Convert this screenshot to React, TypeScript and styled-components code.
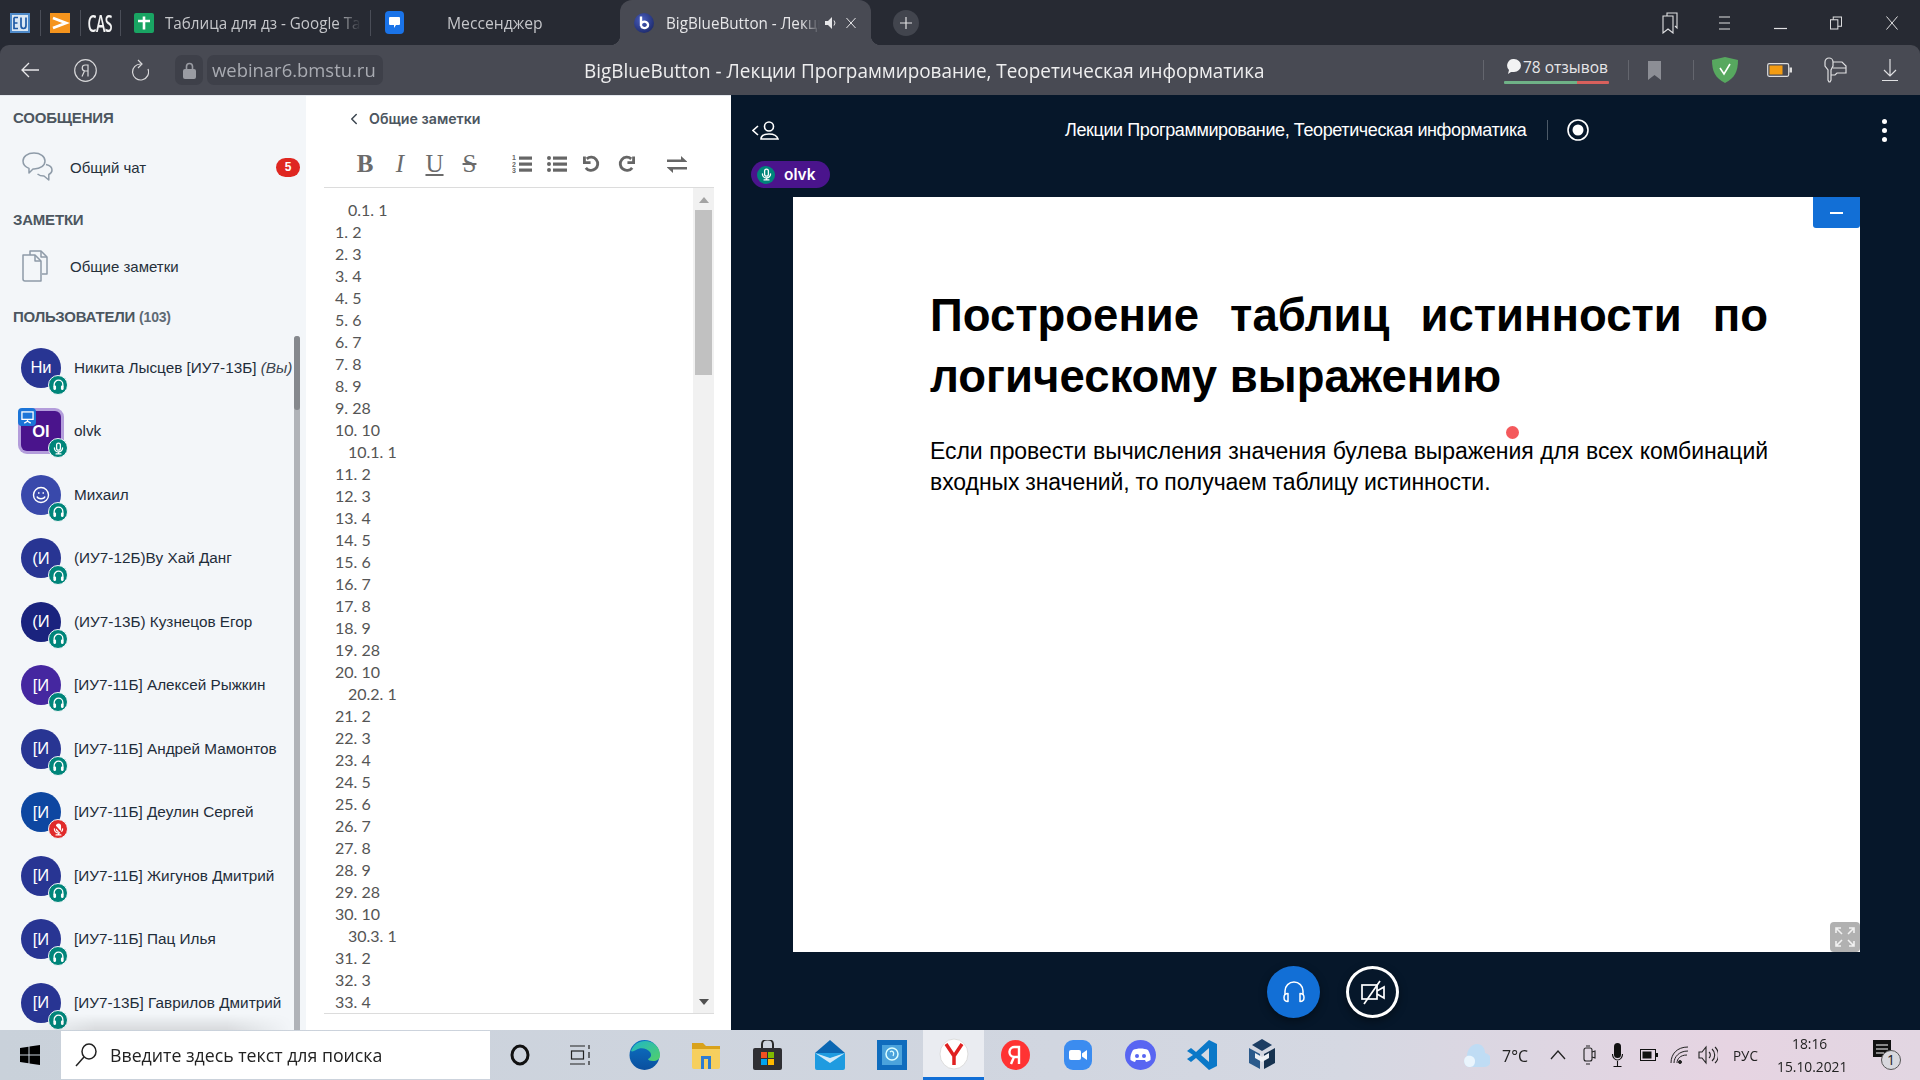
import React from "react";
import styled, { createGlobalStyle } from "styled-components";
import { ChevronLeft } from "lucide-react";

const Global = createGlobalStyle`
  html, body { margin: 0; padding: 0; overflow: hidden; background: #272a33; }
  * { box-sizing: border-box; }
`;

const Page = styled.div`
  width: 1920px; height: 1080px; display: flex; flex-direction: column; overflow: hidden;
  background: #272a33; font-family: "Liberation Sans", Arial, sans-serif;
`;
const Slot = styled.div<{ $w: number; $ml: number }>`
  flex: none; width: ${p => p.$w}px; margin-left: ${p => p.$ml}px;
  display: flex; align-items: center; justify-content: center;
`;
const Squeezed = styled.span<{ $size: number; $color: string; $w: number; $ml: number; $sx: number }>`
  flex: none; display: block; width: ${p => p.$w}px; margin-left: ${p => p.$ml}px; overflow: hidden; white-space: nowrap;
  font-family: "Open Sans", "Noto Sans", sans-serif; font-size: ${p => p.$size}px; color: ${p => p.$color};
  & > span { display: inline-block; transform: scaleX(${p => p.$sx}); transform-origin: left center; }
`;

/* Browser chrome */
const TabBar = styled.div`height: 45px; flex: none; display: flex; align-items: center;`;
const Sep = styled.div<{ $ml: number; $light?: boolean }>`
  flex: none; width: 1px; height: ${p => (p.$light ? 20 : 26)}px; margin-left: ${p => p.$ml}px;
  background: ${p => (p.$light ? "#64666e" : "#4a4d57")};
`;
const CasMark = styled.span`
  display: inline-block; font-family: "Open Sans", sans-serif; font-size: 23px; font-weight: 600; color: #f4f4f4;
  transform: scaleX(.62); letter-spacing: -1px; line-height: 24px;
`;
const ActiveTab = styled.div`
  flex: none; position: relative; margin-left: 77px; width: 251px; height: 45px; align-self: flex-start; background: #484a53;
  border-radius: 12px 12px 0 0; display: flex; align-items: center;
  &::before, &::after { content: ""; position: absolute; bottom: 0; width: 10px; height: 10px; }
  &::before { left: -10px; background: radial-gradient(circle at 0 0, transparent 10px, #484a53 10.5px); }
  &::after { right: -10px; background: radial-gradient(circle at 100% 0, transparent 10px, #484a53 10.5px); }
`;
const FadeLabel = styled(Squeezed)`
  mask-image: linear-gradient(to right, #000 88%, transparent);
`;
const PlusBtn = styled.div`
  flex: none; width: 26px; height: 26px; margin-left: 22px; border-radius: 50%; background: #42454e;
  display: flex; align-items: center; justify-content: center;
`;
const Spring = styled.div`flex: 1;`;
const TabEnd = styled.div`flex: none; width: 22px;`;
const AddressBar = styled.div`
  height: 50px; flex: none; display: flex; align-items: center; background: #484a53; border-radius: 9px 9px 0 0;
`;
const LockBox = styled.div`
  flex: none; margin-left: 26px; width: 28px; height: 30px; background: #3e4049; border-radius: 7px;
  display: flex; align-items: center; justify-content: center;
`;
const UrlBox = styled.div`
  flex: none; margin-left: 4px; width: 176px; height: 30px; background: #3e4049; border-radius: 7px;
  display: flex; align-items: center; padding-left: 5px;
`;
const Reviews = styled.div`
  flex: none; width: 105px; margin-left: 20px; display: flex; flex-direction: column; gap: 4px;
`;
const ReviewTop = styled.div`display: flex; align-items: center; height: 20px; padding-left: 3px;`;
const ReviewBar = styled.div`height: 3px; border-radius: 1px; background: linear-gradient(to right, #6fb287 0 70%, #d8605c 70% 100%);`;

/* Content */
const Content = styled.div`flex: 1; min-height: 0; display: flex;`;
const Sidebar = styled.aside`
  flex: none; width: 306px; background: #f3f6f9; display: flex; flex-direction: column; position: relative; overflow: hidden;
  border-top: 1px solid #e4e8ee;
`;
const Heading = styled.h2<{ $mt: number }>`
  margin: ${p => p.$mt}px 0 0 13px; height: 20px; line-height: 20px; font-size: 15px; font-weight: 700; color: #4c5660;
  letter-spacing: -.2px; text-transform: uppercase;
  & small { font-size: 14px; color: #5f6a74; }
`;
const NavRow = styled.div<{ $mt: number }>`
  margin-top: ${p => p.$mt}px; height: 50px; display: flex; align-items: center; padding: 0 6px 0 22px; flex: none;
`;
const NavIcon = styled.div`flex: none; width: 48px; display: flex;`;
const NavLabel = styled.div`flex: 1; font-size: 15px; color: #26303a;`;
const CountBadge = styled.div`
  flex: none; width: 24px; height: 19px; border-radius: 10px; background: #df2721; color: #fff; font-size: 12px; font-weight: 700;
  display: flex; align-items: center; justify-content: center;
`;
const UsersArea = styled.div`flex: 1; min-height: 0; margin-top: 9px; display: flex; overflow: hidden;`;
const UserList = styled.div`flex: 1; min-width: 0;`;
const UserRow = styled.div`height: 63.5px; display: flex; align-items: center; padding-left: 21px;`;
const Avatar = styled.div<{ $bg: string; $square?: boolean }>`
  flex: none; position: relative; width: 40px; height: 40px; border-radius: ${p => (p.$square ? "6px" : "50%")};
  background: ${p => p.$bg}; color: #fff; font-size: 16.5px; font-weight: ${p => (p.$square ? 700 : 400)};
  display: flex; align-items: center; justify-content: center;
  box-shadow: ${p => (p.$square ? "0 0 0 3px #b39ddb" : "none")};
`;
const VoiceBadge = styled.div<{ $muted?: boolean }>`
  position: absolute; right: -7px; bottom: -7px; width: 20px; height: 20px; border-radius: 50%;
  background: ${p => (p.$muted ? "#e02b2b" : "#00857a")}; border: 1px solid #f3f6f9;
  display: flex; align-items: center; justify-content: center;
`;
const PresenterBadge = styled.div`
  position: absolute; left: -3px; top: -3px; width: 18px; height: 18px; border-radius: 4px; background: #1b75d8;
  display: flex; align-items: center; justify-content: center;
`;
const UserName = styled.div`
  margin-left: 13px; font-size: 15.3px; color: #1f2d3a; white-space: nowrap;
  & em { color: #3b4550; }
`;
const Track = styled.div`
  flex: none; width: 6px; margin-right: 6px; background: #b0b3b8; border-radius: 3px 3px 0 0; position: relative;
`;
const TrackThumb = styled.div`
  position: absolute; left: 0; right: 0; top: 0; height: 74px; background: #85888d; border-radius: 3px;
`;
const BottomShade = styled.div`
  position: absolute; left: 30px; right: 14px; bottom: 0; height: 16px;
  background: linear-gradient(to bottom, transparent, rgba(0,0,0,.11));
  mask-image: linear-gradient(to right, transparent, #000 25%, #000 75%, transparent);
`;

const Notes = styled.section`
  flex: none; width: 425px; background: #fff; border-top: 1px solid #e4e8ee; display: flex; flex-direction: column; padding: 0 17px 16px 18px;
`;
const NotesHead = styled.div`
  height: 45px; flex: none; display: flex; align-items: center; padding-left: 21px; color: #4c5660;
  font-family: Inter, sans-serif; font-weight: 600; font-size: 14.2px; gap: 6px;
`;
const Toolbar = styled.div`
  height: 47px; flex: none; display: flex; align-items: center; border-bottom: 1px solid #dcdcdc; color: #6b6b6b;
`;
const ToolGlyph = styled.span<{ $ml: number; $w: number; $italic?: boolean; $bold?: boolean; $line?: string }>`
  flex: none; width: ${p => p.$w}px; margin-left: ${p => p.$ml}px; text-align: center; font-family: "Liberation Serif", serif;
  font-size: 25px; line-height: 26px; font-weight: ${p => (p.$bold ? 700 : 400)}; font-style: ${p => (p.$italic ? "italic" : "normal")};
  text-decoration: ${p => p.$line || "none"}; color: #6b6b6b;
`;
const ToolIcon = styled.span<{ $ml: number; $w: number }>`
  flex: none; width: ${p => p.$w}px; margin-left: ${p => p.$ml}px; display: flex; justify-content: center; color: #666;
`;
const Editor = styled.div`flex: 1; min-height: 0; display: flex; border-bottom: 1px solid #dcdcdc; overflow: hidden;`;
const EditorText = styled.div`flex: 1; overflow: hidden; padding: 11px 0 0 11px; font-family: Lato, sans-serif; font-size: 16px; line-height: 22px; color: #555;`;
const EditorLine = styled.div<{ $indent?: boolean }>`padding-left: ${p => (p.$indent ? 13 : 0)}px; white-space: pre;`;
const EdBar = styled.div`flex: none; width: 21px; background: #f1f1f1; display: flex; flex-direction: column; align-items: center; padding: 0 2px;`;
const EdArrow = styled.div<{ $down?: boolean }>`
  flex: none; width: 0; height: 0; margin: ${p => (p.$down ? "auto 0 8px" : "9px 0 7px")};
  border-left: 5px solid transparent; border-right: 5px solid transparent;
  ${p => (p.$down ? "border-top: 6px solid #505050;" : "border-bottom: 6px solid #a3a3a3;")}
`;
const EdThumb = styled.div`flex: none; width: 100%; height: 165px; background: #c1c1c1;`;

/* Main */
const Main = styled.main`flex: 1; min-width: 0; background: #06172a; display: flex; flex-direction: column;`;
const MainHead = styled.div`height: 66px; flex: none; padding-top: 4px; display: flex; align-items: center;`;
const MeetingTitle = styled.div`
  flex: none; width: 464px; margin-left: 286px; font-size: 18px; color: #fff; white-space: nowrap; letter-spacing: -.4px;
`;
const TitleSep = styled.div`flex: none; width: 1px; height: 20px; margin-left: 18px; background: #4c5a68;`;
const Kebab = styled.div`
  flex: none; margin-left: auto; margin-right: 33px; display: flex; flex-direction: column; gap: 4px;
  & i { display: block; width: 5px; height: 5px; background: #fff; border-radius: 50%; }
`;
const TalkerPill = styled.div`
  flex: none; align-self: flex-start; margin-left: 20px; width: 79px; height: 27px; border-radius: 14px; background: #4a148c;
  display: flex; align-items: center; padding-left: 6px; gap: 9px; color: #fff; font-family: Inter, sans-serif; font-size: 15.5px; font-weight: 600;
`;
const TalkerMic = styled.div`
  flex: none; width: 18px; height: 18px; border-radius: 50%; background: #00857a; display: flex; align-items: center; justify-content: center;
`;
const Slide = styled.div`
  flex: none; margin: 9px 60px 0 62px; height: 755px; background: #fff; position: relative; padding: 88px 92px 0 137px; color: #000;
`;
const SlideTitle = styled.h1`
  margin: 0; font-size: 45.5px; line-height: 61px; font-weight: 700; text-align: justify;
`;
const SlideBody = styled.p`
  margin: 29px 0 0; font-size: 23px; line-height: 31px; text-align: justify; letter-spacing: -.07px; word-spacing: -.5px;
`;
const Pointer = styled.div`
  position: absolute; left: 713px; top: 229px; width: 13px; height: 13px; border-radius: 50%; background: #f4595c;
`;
const MinButton = styled.div`
  position: absolute; top: 0; right: 0; width: 47px; height: 31px; background: #126fd6; border-radius: 0 0 3px 3px;
  display: flex; align-items: center; justify-content: center;
  & i { display: block; width: 13px; height: 2px; background: #fff; }
`;
const ExpandButton = styled.div`
  position: absolute; right: 0; bottom: 0; width: 30px; height: 30px; background: #b1b1b1; border-radius: 4px;
  display: flex; align-items: center; justify-content: center;
`;
const Actions = styled.div`flex: 1; display: flex; padding: 14px 0 0 536px; gap: 26px;`;
const RoundBtn = styled.div<{ $filled?: boolean }>`
  flex: none; width: 53px; height: 52px; border-radius: 50%; display: flex; align-items: center; justify-content: center;
  background: ${p => (p.$filled ? "#126fd6" : "#06172a")}; border: ${p => (p.$filled ? "none" : "3px solid #fff")};
  box-shadow: 0 3px 8px rgba(0,0,0,.4);
`;

/* Taskbar */
const Taskbar = styled.footer`
  height: 50px; flex: none; display: flex; align-items: center; background: linear-gradient(to right, #c9d1da 0%, #d1d6e0 55%, #d5d8e2 70%, #e6d4e2 90%, #e2d6e2 100%);
`;
const SearchBox = styled.div`
  flex: none; margin-left: 21px; width: 429px; height: 48px; background: #fff; display: flex; align-items: center; padding-left: 14px;
`;
const PinnedActive = styled.div`
  flex: none; margin-left: 16px; width: 61px; height: 50px; background: rgba(255,255,255,.55); border-bottom: 3px solid #126fd6;
  display: flex; align-items: center; justify-content: center;
`;
const Clock = styled.div`
  flex: none; margin-left: 17px; width: 70px; display: flex; flex-direction: column; align-items: center; gap: 2px;
  line-height: 21px;
`;

const Headset = ({ s = 12, c = "#fff", w = 2.4 }: { s?: number; c?: string; w?: number }) => (
  <svg width={s} height={s} viewBox="0 0 24 24" fill="none" stroke={c} strokeWidth={w} strokeLinecap="round">
    <path d="M4 15v-3a8 8 0 0 1 16 0v3" />
    <rect x="2.5" y="14" width="5" height="8" rx="2" fill={c} stroke="none" />
    <rect x="16.5" y="14" width="5" height="8" rx="2" fill={c} stroke="none" />
  </svg>
);
const OutlineHeadset = () => (
  <svg width="24" height="26" viewBox="0 0 24 26" fill="none" stroke="#fff" strokeWidth="1.5" strokeLinejoin="round">
    <path d="M3 16v-4a9 9 0 0 1 18 0v4" />
    <path d="M6 14.500v8c-2.500 0-4-1.800-4-4s1.500-4 4-4zM18 14.500v8c2.500 0 4-1.800 4-4s-1.500-4-4-4z" />
  </svg>
);
const Mic = ({ s = 12, off = false }: { s?: number; off?: boolean }) => (
  <svg width={s} height={s} viewBox="0 0 24 24" fill="none" stroke="#fff" strokeWidth="2.4" strokeLinecap="round">
    <rect x="8.5" y="2" width="7" height="13" rx="3.5" fill={off ? "#fff" : "none"} />
    <path d="M4.5 11a7.5 7.5 0 0 0 15 0M12 18.5V22M7.5 22h9" />
    {off && <path d="M4 4l16 17" stroke="#e02b2b" strokeWidth="3" />}
  </svg>
);

type U = { i: string; bg: string; name: string; you?: boolean; muted?: boolean; kind?: string };
const users: U[] = [
  { i: "Ни", bg: "#283593", name: "Никита Лысцев [ИУ7-13Б] ", you: true },
  { i: "Ol", bg: "#4a148c", name: "olvk", kind: "presenter" },
  { i: "", bg: "#3949ab", name: "Михаил", kind: "smile" },
  { i: "(И", bg: "#283593", name: "(ИУ7-12Б)Ву Хай Данг" },
  { i: "(И", bg: "#1a237e", name: "(ИУ7-13Б) Кузнецов Егор" },
  { i: "[И", bg: "#4527a0", name: "[ИУ7-11Б] Алексей Рыжкин" },
  { i: "[И", bg: "#283593", name: "[ИУ7-11Б] Андрей Мамонтов" },
  { i: "[И", bg: "#0d47a1", name: "[ИУ7-11Б] Деулин Сергей", muted: true },
  { i: "[И", bg: "#283593", name: "[ИУ7-11Б] Жигунов Дмитрий" },
  { i: "[И", bg: "#283593", name: "[ИУ7-11Б] Пац Илья" },
  { i: "[И", bg: "#283593", name: "[ИУ7-13Б] Гаврилов Дмитрий" },
];

const cycle = ["2", "3", "4", "5", "6", "7", "8", "9", "28", "10"];
const groupHeads = ["0.1. 1", "10.1. 1", "20.2. 1", "30.3. 1"];
const noteLines: { t: string; indent?: boolean }[] = [];
{
  let n = 1;
  for (const head of groupHeads) {
    noteLines.push({ t: head, indent: true });
    for (const v of cycle) {
      if (n <= 33) noteLines.push({ t: `${n}. ${v}` });
      n++;
    }
  }
}

const App = () => (
  <Page>
    <Global />
    <TabBar>
      <Slot $w={20} $ml={10}>
        <svg width="20" height="20" viewBox="0 0 20 20"><rect width="20" height="20" fill="#4f8ac9" /><rect x="2" y="2" width="16" height="16" fill="#dbe7f4" /><path d="M4 4.500h4M4 4.500v11h4M4 10h3.500M11 4.500v8a2.500 3 0 0 0 5 0v-8" stroke="#1f5aa5" strokeWidth="1.700" fill="none" /></svg>
      </Slot>
      <Sep $ml={10} />
      <Slot $w={20} $ml={9}>
        <svg width="20" height="20" viewBox="0 0 20 20"><rect width="20" height="20" fill="#f5941d" /><path d="M3 5l13 5-13 5" stroke="#fff" strokeWidth="2.800" fill="none" /></svg>
      </Slot>
      <Sep $ml={10} />
      <Slot $w={20} $ml={9}><CasMark>CAS</CasMark></Slot>
      <Sep $ml={10} />
      <Slot $w={20} $ml={13}>
        <svg width="20" height="20" viewBox="0 0 20 20"><rect width="20" height="20" rx="2" fill="#19a463" /><path d="M4 8h12M10 3.500v13" stroke="#fff" strokeWidth="2.600" /></svg>
      </Slot>
      <FadeLabel $size={16} $color="#c5c6ca" $w={196} $ml={11} $sx={0.95}><span>Таблица для дз - Google Таблицы</span></FadeLabel>
      <Sep $ml={9} />
      <Slot $w={19} $ml={14}>
        <svg width="19" height="23" viewBox="0 0 19 23"><rect width="19" height="23" rx="4" fill="#1a73e8" /><path d="M5 6h9a1 1 0 0 1 1 1v6a1 1 0 0 1-1 1h-3l-2 3v-3H5a1 1 0 0 1-1-1V7a1 1 0 0 1 1-1z" fill="#fff" /></svg>
      </Slot>
      <Squeezed $size={16} $color="#c5c6ca" $w={96} $ml={43} $sx={0.98}><span>Мессенджер</span></Squeezed>
      <ActiveTab>
        <Slot $w={20} $ml={14}>
          <svg width="20" height="20" viewBox="0 0 20 20"><defs><radialGradient id="bb" cx=".4" cy=".35" r=".7"><stop offset="0" stopColor="#4a5fc0" /><stop offset="1" stopColor="#1d2a6b" /></radialGradient></defs><circle cx="10" cy="10" r="10" fill="url(#bb)" /><path d="M7 3.500v9.500M7 11a3.600 3.200 0 1 1 .1 2" stroke="#fff" strokeWidth="2.400" fill="none" /></svg>
        </Slot>
        <FadeLabel $size={16} $color="#e6e6e8" $w={154} $ml={12} $sx={0.95}><span>BigBlueButton - Лекции Программирование</span></FadeLabel>
        <Slot $w={12} $ml={5}>
          <svg width="12" height="12" viewBox="0 0 12 12" fill="#e6e6e8"><path d="M0 4h3l4-4v12l-4-4H0z" /><path d="M9 3.500a4 4 0 0 1 0 5" stroke="#e6e6e8" fill="none" /></svg>
        </Slot>
        <Slot $w={10} $ml={9}>
          <svg width="11" height="12" viewBox="0 0 11 12" stroke="#e6e6e8" strokeWidth="1.100"><path d="M.5.5l10 11M10.500.5l-10 11" /></svg>
        </Slot>
      </ActiveTab>
      <PlusBtn>
        <svg width="12" height="12" viewBox="0 0 12 12" stroke="#e0e0e2" strokeWidth="1.200"><path d="M6 0v12M0 6h12" /></svg>
      </PlusBtn>
      <Spring />
      <Slot $w={16} $ml={0}>
        <svg width="16" height="22" viewBox="0 0 16 22" fill="none" stroke="#e0e0e2" strokeWidth="1.100"><path d="M5 4V1h10v15l-2-2" /><path d="M1 4h10v17l-5-4-5 4z" /></svg>
      </Slot>
      <Slot $w={11} $ml={41}>
        <svg width="11" height="14" viewBox="0 0 11 14" stroke="#e0e0e2" strokeWidth="1.100"><path d="M0 1h11M0 7h11M0 13h11" /></svg>
      </Slot>
      <Slot $w={13} $ml={44}>
        <svg width="13" height="14" viewBox="0 0 13 14" stroke="#e0e0e2" strokeWidth="1.200"><path d="M0 12.500h13" /></svg>
      </Slot>
      <Slot $w={12} $ml={43}>
        <svg width="13" height="14" viewBox="0 0 13 14" fill="none" stroke="#e0e0e2" strokeWidth="1.100"><rect x=".5" y="3.500" width="8" height="10" /><path d="M3.500 3.500V.5h9v10h-4" /></svg>
      </Slot>
      <Slot $w={12} $ml={44}>
        <svg width="12" height="14" viewBox="0 0 12 14" stroke="#e0e0e2" strokeWidth="1"><path d="M.5.500l11 13M11.500.5l-11 13" /></svg>
      </Slot>
      <TabEnd />
    </TabBar>
    <AddressBar>
      <Slot $w={18} $ml={21}>
        <svg width="18" height="16" viewBox="0 0 18 16" fill="none" stroke="#e8e8ea" strokeWidth="1.300"><path d="M18 8H1M8 1L1 8l7 7" /></svg>
      </Slot>
      <Slot $w={23} $ml={35}>
        <svg width="23" height="23" viewBox="0 0 23 23" fill="none" stroke="#d8d8da" strokeWidth="1.200"><circle cx="11.500" cy="11.500" r="10.800" /><path d="M14 17.500V6h-2.500a3 3 0 0 0-.5 6h3M10.500 12L8 17.500" /></svg>
      </Slot>
      <Slot $w={18} $ml={34}>
        <svg width="18" height="22" viewBox="0 0 18 22" fill="none" stroke="#d8d8da" strokeWidth="1.200"><path d="M10 5a8 8 0 1 0 7 5" /><path d="M7 1l4 4-4 4" /></svg>
      </Slot>
      <LockBox>
        <svg width="13" height="17" viewBox="0 0 13 17"><path d="M3.500 7V4.500a3 3 0 0 1 6 0V7" stroke="#9a9ca3" strokeWidth="1.600" fill="none" /><rect y="7" width="13" height="10" rx="2" fill="#9a9ca3" /></svg>
      </LockBox>
      <UrlBox>
        <Squeezed $size={19} $color="#a9abb2" $w={168} $ml={0} $sx={0.97}><span>webinar6.bmstu.ru</span></Squeezed>
      </UrlBox>
      <Squeezed $size={20} $color="#eeeeef" $w={680} $ml={201} $sx={0.945}><span>BigBlueButton - Лекции Программирование, Теоретическая информатика</span></Squeezed>
      <Sep $ml={219} $light />
      <Reviews>
        <ReviewTop>
          <svg width="14" height="15" viewBox="0 0 14 15"><path d="M7 0a7 6.500 0 0 1 0 13H4l-3 2 1-4A6.500 6.500 0 0 1 7 0z" fill="#f2f2f3" /></svg>
          <Squeezed $size={15.5} $color="#e6e6e8" $w={86} $ml={2} $sx={1}><span>78 отзывов</span></Squeezed>
        </ReviewTop>
        <ReviewBar />
      </Reviews>
      <Sep $ml={19} $light />
      <Slot $w={13} $ml={19}>
        <svg width="13" height="19" viewBox="0 0 13 19"><path d="M0 0h13v19l-6.500-5L0 19z" fill="#8c8e95" /></svg>
      </Slot>
      <Sep $ml={32} $light />
      <Slot $w={26} $ml={18}>
        <svg width="26" height="26" viewBox="0 0 26 26"><path d="M13 0l13 3c0 11-3 18-13 23C3 21 0 14 0 3z" fill="#57a85f" /><path d="M8 11l4 6 6-10" stroke="#fff" strokeWidth="1.600" fill="none" /></svg>
      </Slot>
      <Slot $w={25} $ml={29}>
        <svg width="25" height="14" viewBox="0 0 25 14"><rect x=".7" y=".7" width="21" height="12.600" rx="1.500" fill="none" stroke="#ddd" strokeWidth="1.200" /><rect x="2.500" y="2.500" width="13" height="9" fill="#f39c12" /><rect x="22.500" y="4.500" width="2.500" height="5" fill="#ddd" /></svg>
      </Slot>
      <Slot $w={23} $ml={32}>
        <svg width="23" height="26" viewBox="0 0 23 26" fill="none" stroke="#e0e0e2" strokeWidth="1.200"><path d="M1 5a4 4 0 0 1 8 0v4L7 13v10l-1 2H5l-1-2V13L1 9zM9 5h9l4 4v7h-9l-2 2H7M9 11h13" /></svg>
      </Slot>
      <Slot $w={16} $ml={35}>
        <svg width="16" height="22" viewBox="0 0 16 22" fill="none" stroke="#e0e0e2" strokeWidth="1.200"><path d="M8 0v17M2 11l6 6 6-6M0 21.500h16" /></svg>
      </Slot>
    </AddressBar>
    <Content>
      <Sidebar>
        <Heading $mt={12}>Сообщения</Heading>
        <NavRow $mt={14}>
          <NavIcon>
            <svg width="31" height="30" viewBox="0 0 31 30" fill="none" stroke="#8e9ba8" strokeWidth="1.500" strokeLinejoin="round"><path d="M12 1c6.500 0 11 3.400 11 8s-4.500 8-11 8h-1l-4 4v-4.600C3.500 15 1 12.300 1 9c0-4.600 4.500-8 11-8z" /><path d="M24 12.500c3.500.8 6 2.800 6 5.500 0 2-1.200 3.600-3.200 4.500V28L22 24c-2.800 0-5-.8-6.500-2" /></svg>
          </NavIcon>
          <NavLabel>Общий чат</NavLabel>
          <CountBadge>5</CountBadge>
        </NavRow>
        <Heading $mt={18}>Заметки</Heading>
        <NavRow $mt={11}>
          <NavIcon>
            <svg width="26" height="32" viewBox="0 0 26 32" fill="none" stroke="#8e9ba8" strokeWidth="1.500" strokeLinejoin="round"><path d="M8 5V1h11l6 6v17h-5" /><path d="M19 1v6h6" /><path d="M1 5h12l6 6v20H3a2 2 0 0 1-2-2z" /><path d="M13 5v6h6" /></svg>
          </NavIcon>
          <NavLabel>Общие заметки</NavLabel>
        </NavRow>
        <Heading $mt={16}>Пользователи <small>(103)</small></Heading>
        <UsersArea>
          <UserList>
            {users.map(u => (
              <UserRow key={u.name}>
                <Avatar $bg={u.bg} $square={u.kind === "presenter"}>
                  {u.kind === "smile" ? (
                    <svg width="18" height="18" viewBox="0 0 18 18" fill="none" stroke="#fff" strokeWidth="1.400"><circle cx="9" cy="9" r="7.500" /><path d="M5 10.500c1 3 7 3 8 0M6 7h1.500M10.500 7H12" /></svg>
                  ) : u.i}
                  {u.kind === "presenter" && (
                    <PresenterBadge>
                      <svg width="13" height="13" viewBox="0 0 14 14" fill="none" stroke="#fff" strokeWidth="1.400"><rect x="1" y="1" width="12" height="8" /><path d="M7 9v2M3.500 13L7 11l3.500 2" /></svg>
                    </PresenterBadge>
                  )}
                  <VoiceBadge $muted={u.muted}>
                    {u.kind === "presenter" ? <Mic s={13} /> : u.muted ? <Mic s={13} off /> : <Headset s={13} />}
                  </VoiceBadge>
                </Avatar>
                <UserName>{u.name}{u.you && <em>(Вы)</em>}</UserName>
              </UserRow>
            ))}
          </UserList>
          <Track><TrackThumb /></Track>
        </UsersArea>
        <BottomShade />
      </Sidebar>
      <Notes>
        <NotesHead>
          <ChevronLeft size={18} strokeWidth={2} color="#3c4650" />
          <span>Общие заметки</span>
        </NotesHead>
        <Toolbar>
          <ToolGlyph $ml={32} $w={18} $bold>B</ToolGlyph>
          <ToolGlyph $ml={19} $w={14} $italic>I</ToolGlyph>
          <ToolGlyph $ml={18} $w={19} $line="underline">U</ToolGlyph>
          <ToolGlyph $ml={16} $w={19} $line="line-through">S</ToolGlyph>
          <ToolIcon $ml={33} $w={20}>
            <svg width="20" height="20" viewBox="0 0 20 20" fill="#666"><rect x="7" y="2.500" width="13" height="3.200" /><rect x="7" y="8.500" width="13" height="3.200" /><rect x="7" y="14.500" width="13" height="3.200" /><text x="0" y="6" fontSize="7" fontWeight="700" fontFamily="Liberation Sans">1</text><text x="0" y="12.500" fontSize="7" fontWeight="700" fontFamily="Liberation Sans">2</text><text x="0" y="19" fontSize="7" fontWeight="700" fontFamily="Liberation Sans">3</text></svg>
          </ToolIcon>
          <ToolIcon $ml={15} $w={20}>
            <svg width="20" height="20" viewBox="0 0 20 20" fill="#666"><rect x="6" y="2.500" width="14" height="3.200" /><rect x="6" y="8.500" width="14" height="3.200" /><rect x="6" y="14.500" width="14" height="3.200" /><circle cx="2" cy="4" r="2" /><circle cx="2" cy="10" r="2" /><circle cx="2" cy="16" r="2" /></svg>
          </ToolIcon>
          <ToolIcon $ml={16} $w={17}>
            <svg width="18" height="18" viewBox="0 0 18 18" fill="none" stroke="#666" strokeWidth="3"><path d="M4 3.500A7 7 0 1 1 3 13" /><path d="M1.500 1v6.500H8" /></svg>
          </ToolIcon>
          <ToolIcon $ml={18} $w={17}>
            <svg width="18" height="18" viewBox="0 0 18 18" fill="none" stroke="#666" strokeWidth="3"><path d="M14 3.500A7 7 0 1 0 15 13" /><path d="M16.500 1v6.500H10" /></svg>
          </ToolIcon>
          <ToolIcon $ml={32} $w={20}>
            <svg width="20" height="17" viewBox="0 0 20 17" fill="#666"><path d="M0 3.500h14V0l6 5.500v.5H0zM20 11H0v.5L6 17v-3.500h14z" /></svg>
          </ToolIcon>
        </Toolbar>
        <Editor>
          <EditorText>
            {noteLines.map((l, i) => <EditorLine key={i} $indent={l.indent}>{l.t}</EditorLine>)}
          </EditorText>
          <EdBar>
            <EdArrow />
            <EdThumb />
            <EdArrow $down />
          </EdBar>
        </Editor>
      </Notes>
      <Main>
        <MainHead>
          <Slot $w={27} $ml={21}>
            <svg width="27" height="19" viewBox="0 0 27 19" fill="none" stroke="#fff" strokeWidth="1.600"><path d="M6 5L1 9.500 6 14" /><circle cx="17" cy="5.500" r="4.500" /><path d="M9 18c0-3.500 3.500-5 8-5s8 1.500 9 5z" /></svg>
          </Slot>
          <MeetingTitle>Лекции Программирование, Теоретическая информатика</MeetingTitle>
          <TitleSep />
          <Slot $w={22} $ml={19}>
            <svg width="22" height="22" viewBox="0 0 22 22"><circle cx="11" cy="11" r="10" fill="none" stroke="#fff" strokeWidth="1.600" /><circle cx="11" cy="11" r="5.500" fill="#fff" /></svg>
          </Slot>
          <Kebab><i /><i /><i /></Kebab>
        </MainHead>
        <TalkerPill>
          <TalkerMic><Mic s={13} /></TalkerMic>
          olvk
        </TalkerPill>
        <Slide>
          <SlideTitle>Построение таблиц истинности по логическому выражению</SlideTitle>
          <SlideBody>Если провести вычисления значения булева выражения для всех комбинаций входных значений, то получаем таблицу истинности.</SlideBody>
          <Pointer />
          <MinButton><i /></MinButton>
          <ExpandButton>
            <svg width="20" height="20" viewBox="0 0 20 20" fill="none" stroke="#f2f2f2" strokeWidth="1.600"><path d="M1 6V1h5M1 1l6 6M19 6V1h-5M19 1l-6 6M1 14v5h5M1 19l6-6M19 14v5h-5M19 19l-6-6" /></svg>
          </ExpandButton>
        </Slide>
        <Actions>
          <RoundBtn $filled><OutlineHeadset /></RoundBtn>
          <RoundBtn>
            <svg width="26" height="26" viewBox="0 0 26 26" fill="none" stroke="#fff" strokeWidth="1.700"><rect x="2" y="6" width="15" height="14" /><path d="M17 12l7-4v11l-7-4M20 2L4 25" /></svg>
          </RoundBtn>
        </Actions>
      </Main>
    </Content>
    <Taskbar>
      <Slot $w={20} $ml={20}>
        <svg width="20" height="20" viewBox="0 0 20 20" fill="#000"><path d="M0 3l8.500-1.300v7.800H0zM9.500 1.500L20 0v9.500H9.500zM0 10.500h8.500v7.800L0 17zM9.500 10.500H20V20L9.500 18.500z" /></svg>
      </Slot>
      <SearchBox>
        <svg width="22" height="24" viewBox="0 0 22 24" fill="none" stroke="#222" strokeWidth="1.500"><ellipse cx="14" cy="8.500" rx="7" ry="7.500" /><path d="M9 14L1 23" /></svg>
        <Squeezed $size={18} $color="#222" $w={290} $ml={13} $sx={0.985}><span>Введите здесь текст для поиска</span></Squeezed>
      </SearchBox>
      <Slot $w={20} $ml={20}>
        <svg width="20" height="22" viewBox="0 0 20 22"><ellipse cx="10" cy="11" rx="8" ry="9" fill="none" stroke="#111" strokeWidth="3" /></svg>
      </Slot>
      <Slot $w={21} $ml={40}>
        <svg width="21" height="22" viewBox="0 0 21 22" fill="none" stroke="#222" strokeWidth="1.200"><rect x="1.500" y="7" width="12" height="8" /><path d="M0 2h15M0 20h15M19 1v4M19 8v6M19 17v4" /></svg>
      </Slot>
      <Slot $w={31} $ml={38}>
        <svg width="31" height="30" viewBox="0 0 31 30"><defs><linearGradient id="edge1" x1="0" y1="0" x2="1" y2="1"><stop offset="0" stopColor="#1fb5c9" /><stop offset="1" stopColor="#52d068" /></linearGradient><linearGradient id="edge2" x1="0" y1="0" x2="0" y2="1"><stop offset="0" stopColor="#0c72c4" /><stop offset="1" stopColor="#0a4f9e" /></linearGradient></defs><circle cx="15.500" cy="15" r="15" fill="url(#edge2)" /><path d="M2 11C5 2 14-1 22 2c6 2.500 9 8 9 13 0 4-3 6-7 6-3 0-5-1-5-2 3-1 4-4 2-7-3-4-10-5-14-2-2 1-4 2-5 1z" fill="url(#edge1)" /></svg>
      </Slot>
      <Slot $w={28} $ml={32}>
        <svg width="28" height="28" viewBox="0 0 28 28"><path d="M0 2h11l3 3h14v5H0z" fill="#d9a21b" /><path d="M0 8h28v18a2 2 0 0 1-2 2H2a2 2 0 0 1-2-2z" fill="#f6cf5e" /><path d="M9 28V15h10v13h-3V18h-4v10z" fill="#2d7dd2" /></svg>
      </Slot>
      <Slot $w={29} $ml={33}>
        <svg width="29" height="30" viewBox="0 0 29 30"><path d="M9 8V4a5 4 0 0 1 11 0v4" fill="none" stroke="#2a2a2a" strokeWidth="2" /><rect y="8" width="29" height="22" rx="2" fill="#2f2f33" /><rect x="8" y="12" width="6" height="6" fill="#f25022" /><rect x="15" y="12" width="6" height="6" fill="#7fba00" /><rect x="8" y="19" width="6" height="6" fill="#00a4ef" /><rect x="15" y="19" width="6" height="6" fill="#ffb900" /></svg>
      </Slot>
      <Slot $w={30} $ml={33}>
        <svg width="30" height="30" viewBox="0 0 30 30"><path d="M15 0l15 13v15H0V13z" fill="#0a66b2" /><path d="M0 13h30v15a2 2 0 0 1-2 2H2a2 2 0 0 1-2-2z" fill="#1e9be0" /><path d="M0 13l15 10 15-10-15 5z" fill="#cfe9f9" /></svg>
      </Slot>
      <Slot $w={30} $ml={32}>
        <svg width="30" height="30" viewBox="0 0 30 30" fill="none"><rect width="30" height="30" fill="#0f6cbd" /><rect x="5" y="5" width="20" height="20" fill="#4ba3dc" /><circle cx="15" cy="14" r="6" stroke="#dff" strokeWidth="1.500" /><path d="M13 12c2-2 5 0 3 4" stroke="#dff" strokeWidth="1.200" /></svg>
      </Slot>
      <PinnedActive>
        <svg width="30" height="32" viewBox="0 0 30 32"><ellipse cx="15" cy="16" rx="14" ry="15" fill="#fff" stroke="#ddd" /><path d="M7 6l8 12v9M23 6l-8 12" stroke="#e02020" strokeWidth="3.500" fill="none" /></svg>
      </PinnedActive>
      <Slot $w={29} $ml={17}>
        <svg width="29" height="30" viewBox="0 0 29 30"><ellipse cx="14.500" cy="15" rx="14.500" ry="15" fill="#f33" /><path d="M18 24V7h-4a5 5 0 0 0-1 10h5M13 17l-3 7" stroke="#fff" strokeWidth="2.400" fill="none" /></svg>
      </Slot>
      <Slot $w={28} $ml={34}>
        <svg width="28" height="30" viewBox="0 0 28 30"><rect width="28" height="30" rx="9" fill="#3b8cf0" /><rect x="5" y="10" width="12" height="10" rx="2" fill="#fff" /><path d="M18 13.500l5-3.500v10l-5-3.500z" fill="#fff" /></svg>
      </Slot>
      <Slot $w={31} $ml={33}>
        <svg width="31" height="30" viewBox="0 0 31 30"><ellipse cx="15.500" cy="15" rx="15.500" ry="15" fill="#5865f2" /><path d="M8 10c4-2 11-2 15 0 2 3 3 7 2.500 10-1.500 1-3 1.500-4.500 2l-1-2h-9l-1 2c-1.500-.5-3-1-4.500-2C5 17 6 13 8 10z" fill="#fff" /><circle cx="12" cy="16" r="2" fill="#5865f2" /><circle cx="19" cy="16" r="2" fill="#5865f2" /></svg>
      </Slot>
      <Slot $w={30} $ml={31}>
        <svg width="30" height="30" viewBox="0 0 30 30"><path d="M22 0l8 4v22l-8 4-13-12-5 4-4-3 6-4-6-4 4-3 5 4z" fill="#0a78c8" /><path d="M22 8l-8 7 8 7z" fill="#d5d9e2" /></svg>
      </Slot>
      <Slot $w={26} $ml={32}>
        <svg width="26" height="32" viewBox="0 0 26 32"><path d="M13 0l10 6-10 6L3 6z" fill="#1c3d63" /><path d="M0 9l11 6v15L0 24z" fill="#2b5a8b" /><path d="M26 9l-11 6v15l11-6z" fill="#16324f" /><path d="M6 14l7 4 7-4v5l-7 4-7-4z" fill="#eef1f5" /></svg>
      </Slot>
      <Slot $w={27} $ml={188}>
        <svg width="27" height="26" viewBox="0 0 27 26"><path d="M6 25a6 6 0 0 1-2-11C4 7 9 2 14 2c5 0 8 4 8 9a7 7 0 0 1-2 14z" fill="#bfdcf4" /><path d="M6 25a6 6 0 0 1-2-11c3-1 8 0 8 5s-3 6-6 6z" fill="#eaf5fd" /></svg>
      </Slot>
      <Squeezed $size={17} $color="#222" $w={30} $ml={12} $sx={0.94}><span>7°C</span></Squeezed>
      <Slot $w={16} $ml={18}>
        <svg width="16" height="10" viewBox="0 0 16 10" fill="none" stroke="#222" strokeWidth="1.300"><path d="M1 9l7-8 7 8" /></svg>
      </Slot>
      <Slot $w={13} $ml={17}>
        <svg width="13" height="20" viewBox="0 0 13 20" fill="none" stroke="#222" strokeWidth="1.100"><rect x="1" y="3" width="8" height="13" rx="2" /><path d="M9 7l3-1v7l-3-1M3 1h4M3 19h4" /></svg>
      </Slot>
      <Slot $w={11} $ml={16}>
        <svg width="11" height="24" viewBox="0 0 11 24"><rect x="2" y="0" width="7" height="15" rx="3.500" fill="#111" /><path d="M.5 11a5 6 0 0 0 10 0M5.500 18v5M1.500 23.500h8" stroke="#111" fill="none" strokeWidth="1.100" /></svg>
      </Slot>
      <Slot $w={18} $ml={17}>
        <svg width="18" height="12" viewBox="0 0 18 12"><rect x=".5" y=".5" width="15" height="11" fill="none" stroke="#111" /><rect x="2.500" y="2.500" width="9" height="7" fill="#111" /><rect x="16" y="4" width="2" height="4" fill="#111" /></svg>
      </Slot>
      <Slot $w={19} $ml={12}>
        <svg width="19" height="18" viewBox="0 0 19 18" fill="none" stroke="#222" strokeWidth="1"><path d="M1 17C1 8 7 1 18 1M4 17c0-6 5-12 14-12M7 17c0-4 3-8 10-8" /><circle cx="10" cy="16" r="1.500" fill="#222" /></svg>
      </Slot>
      <Slot $w={20} $ml={9}>
        <svg width="20" height="20" viewBox="0 0 20 20" fill="none" stroke="#222" strokeWidth="1.100"><path d="M1 7h3l4-5v16l-4-5H1zM11 7a4 4 0 0 1 0 6M14 4a8 8 0 0 1 0 12M17 2a11 11 0 0 1 0 16" /></svg>
      </Slot>
      <Squeezed $size={15} $color="#222" $w={27} $ml={15} $sx={0.9}><span>РУС</span></Squeezed>
      <Clock>
        <Squeezed $size={15} $color="#222" $w={40} $ml={0} $sx={0.92}><span>18:16</span></Squeezed>
        <Squeezed $size={15} $color="#222" $w={70} $ml={0} $sx={0.92}><span>15.10.2021</span></Squeezed>
      </Clock>
      <Slot $w={28} $ml={26}>
        <svg width="28" height="32" viewBox="0 0 28 32"><path d="M0 1h18v17h-5l-4 5v-5H0z" fill="#111" /><path d="M3 6h12M3 10h12M3 14h8" stroke="#fff" strokeWidth="1.200" /><circle cx="18" cy="21" r="9.500" fill="#d8d8de" stroke="#555" /><text x="18" y="26" fontSize="14" fontFamily="Open Sans" textAnchor="middle" fill="#222">1</text></svg>
      </Slot>
    </Taskbar>
  </Page>
);

export default App;
